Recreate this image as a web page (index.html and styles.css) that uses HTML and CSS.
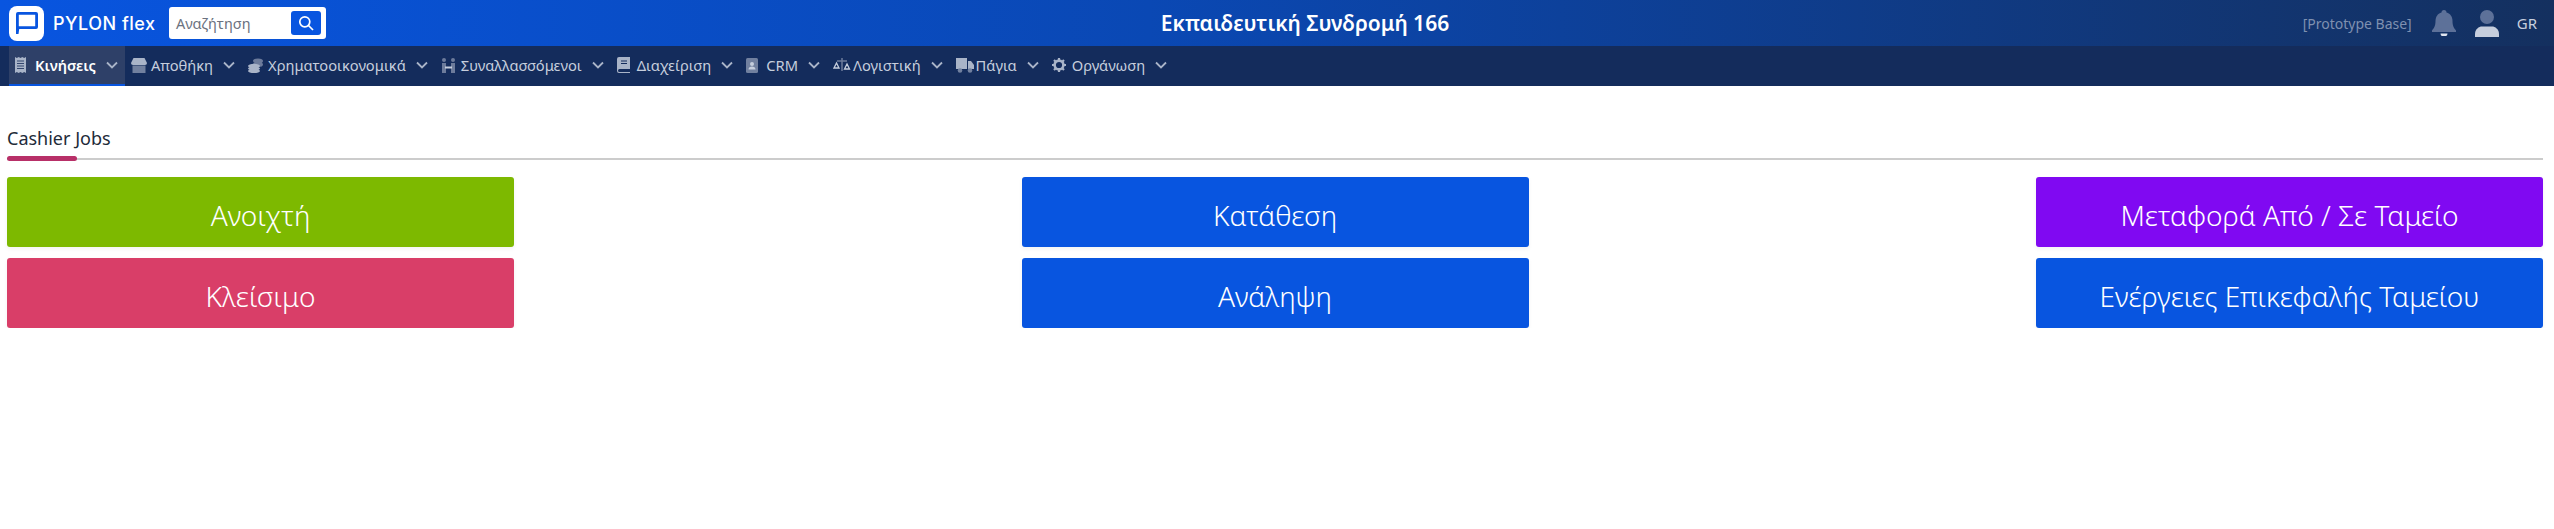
FILE: index.html
```html
<!DOCTYPE html>
<html lang="el">
<head>
    <meta charset="UTF-8">
    <title>Εκπαιδευτική Συνδρομή 166</title>
    <link rel="stylesheet" href="styles.css">
</head>
<body>

<header class="topbar">
    <div class="brand">
        <div class="logo-box">
            <svg width="22" height="24" viewBox="0 0 22 24"><path d="M2 1h18a2 2 0 0 1 2 2v13a2 2 0 0 1-2 2H3.200L2.500 23H0V3a2 2 0 0 1 2-2zM2.800 3.800V15.200h16.400V3.800z" fill="#0855e0"/></svg>
        </div>
        <span class="logo-text">PYLON flex</span>
    </div>
    <div class="search">
        <span class="search-text">Αναζήτηση</span>
        <div class="search-btn">
            <svg width="16" height="16" viewBox="0 0 16 16" fill="none" stroke="#fff" stroke-width="1.700"><circle cx="6.800" cy="6.800" r="5"/><path d="M10.500 10.500L15 15"/></svg>
        </div>
    </div>
    <div class="title">Εκπαιδευτική Συνδρομή 166</div>
    <div class="top-right">
        <span class="proto">[Prototype Base]</span>
        <svg class="bell" width="24" height="26" viewBox="0 0 24 26"><path d="M12 0a2.500 2.500 0 0 1 2.500 2.500c4 1 6 4.500 6 8.500 0 5 1.500 7 3.500 9.500v1.500H0v-1.500C2 18 3.500 16 3.500 11c0-4 2-7.500 6-8.500A2.500 2.500 0 0 1 12 0z" fill="#5d7199"/><path d="M8.500 23.500h7a3.500 3 0 0 1-7 0z" fill="#dfe4ee"/></svg>
        <svg class="user" width="24" height="27" viewBox="0 0 24 27"><circle cx="12" cy="7" r="7" fill="#5d7199"/><path d="M0 27v-3c0-5 4-7.500 7-7.500h10c3 0 7 2.500 7 7.500v3z" fill="#c6cedd"/></svg>
        <span class="lang">GR</span>
    </div>
</header>

<nav class="menu">
    <div class="menu-item active">
        <span class="menu-icon"><svg width="11" height="16" viewBox="0 0 11 16"><path d="M0 0l1.800 1 1.900-1 1.800 1 1.800-1 1.900 1L11 0v16l-1.800-1-1.900 1-1.800-1-1.800 1-1.900-1L0 16z" fill="#a9b4c8"/><path d="M2 4h7M2 6.500h7M2 9h7M2 11.500h7" stroke="#33466f" stroke-width="1"/></svg></span>
        <span>Κινήσεις</span>
        <svg class="chev" width="12" height="8" viewBox="0 0 12 8"><path d="M1 1.500l5 5 5-5" fill="none" stroke="#a9b4c8" stroke-width="1.800"/></svg>
    </div>
    <div class="menu-item">
        <span class="menu-icon"><svg width="16" height="15" viewBox="0 0 16 15"><path d="M2.500 0h11L16 5a2 2 0 0 1-2 2H2a2 2 0 0 1-2-2z" fill="#a9b4c8"/><path d="M1.500 7.500h13V15h-13z" fill="#71809f"/></svg></span>
        <span>Αποθήκη</span>
        <svg class="chev" width="12" height="8" viewBox="0 0 12 8"><path d="M1 1.500l5 5 5-5" fill="none" stroke="#a9b4c8" stroke-width="1.800"/></svg>
    </div>
    <div class="menu-item">
        <span class="menu-icon"><svg width="15" height="15" viewBox="0 0 15 15"><ellipse cx="10" cy="3" rx="5" ry="2.500" fill="#6c7b9b"/><ellipse cx="10" cy="6.500" rx="5" ry="2.500" fill="#6c7b9b"/><ellipse cx="6" cy="8" rx="6" ry="2.200" fill="#a9b4c8"/><ellipse cx="6" cy="10.500" rx="6" ry="2.200" fill="#a9b4c8"/><ellipse cx="6" cy="13" rx="6" ry="2" fill="#a9b4c8"/></svg></span>
        <span>Χρηματοοικονομικά</span>
        <svg class="chev" width="12" height="8" viewBox="0 0 12 8"><path d="M1 1.500l5 5 5-5" fill="none" stroke="#a9b4c8" stroke-width="1.800"/></svg>
    </div>
    <div class="menu-item">
        <span class="menu-icon"><svg width="15" height="15" viewBox="0 0 15 15"><circle cx="3" cy="2" r="2" fill="#6c7b9b"/><circle cx="12" cy="2" r="2" fill="#6c7b9b"/><path d="M1 5h4v10H1zM10 5h4v10h-4z" fill="#6c7b9b"/><path d="M4 9.500h7" stroke="#c6cedd" stroke-width="2"/></svg></span>
        <span>Συναλλασσόμενοι</span>
        <svg class="chev" width="12" height="8" viewBox="0 0 12 8"><path d="M1 1.500l5 5 5-5" fill="none" stroke="#a9b4c8" stroke-width="1.800"/></svg>
    </div>
    <div class="menu-item">
        <span class="menu-icon"><svg width="13" height="16" viewBox="0 0 13 16"><path d="M2 0h11v12H2.500a1.500 1.500 0 0 0 0 3H13v1H2a2 2 0 0 1-2-2V2a2 2 0 0 1 2-2z" fill="#a9b4c8"/><path d="M4 4h6M4 6.500h6" stroke="#142c5c"/></svg></span>
        <span>Διαχείριση</span>
        <svg class="chev" width="12" height="8" viewBox="0 0 12 8"><path d="M1 1.500l5 5 5-5" fill="none" stroke="#a9b4c8" stroke-width="1.800"/></svg>
    </div>
    <div class="menu-item">
        <span class="menu-icon"><svg width="12" height="15" viewBox="0 0 12 15"><rect width="12" height="15" rx="1.500" fill="#71809f"/><circle cx="6" cy="6" r="2" fill="#c6cedd"/><path d="M2.500 11.500c0-2 1.500-3 3.500-3s3.500 1 3.500 3z" fill="#c6cedd"/></svg></span>
        <span>CRM</span>
        <svg class="chev" width="12" height="8" viewBox="0 0 12 8"><path d="M1 1.500l5 5 5-5" fill="none" stroke="#a9b4c8" stroke-width="1.800"/></svg>
    </div>
    <div class="menu-item">
        <span class="menu-icon"><svg width="18" height="15" viewBox="0 0 18 15" fill="none"><path d="M9 0v13M4 3h10" stroke="#6c7b9b" stroke-width="1.500"/><path d="M3.500 5L1 10h5zM14 6l-2.500 5h5z" stroke="#c6cedd" stroke-width="1.300"/></svg></span>
        <span>Λογιστική</span>
        <svg class="chev" width="12" height="8" viewBox="0 0 12 8"><path d="M1 1.500l5 5 5-5" fill="none" stroke="#a9b4c8" stroke-width="1.800"/></svg>
    </div>
    <div class="menu-item">
        <span class="menu-icon"><svg width="18" height="15" viewBox="0 0 18 15"><path d="M0 0h11v11H0z" fill="#a9b4c8"/><path d="M12 3h3l3 4v4h-6z" fill="#a9b4c8"/><circle cx="4" cy="12.500" r="2.300" fill="#71809f"/><circle cx="14" cy="12.500" r="2.300" fill="#71809f"/></svg></span>
        <span>Πάγια</span>
        <svg class="chev" width="12" height="8" viewBox="0 0 12 8"><path d="M1 1.500l5 5 5-5" fill="none" stroke="#a9b4c8" stroke-width="1.800"/></svg>
    </div>
    <div class="menu-item">
        <span class="menu-icon"><svg width="14" height="14" viewBox="0 0 14 14"><path d="M7 2.600a4.400 4.400 0 1 0 0 8.800 4.400 4.400 0 0 0 0-8.800z" fill="none" stroke="#a9b4c8" stroke-width="2.600"/><path d="M7 0v3M7 11v3M0 7h3M11 7h3M2 2l2 2M10 10l2 2M12 2l-2 2M4 10l-2 2" stroke="#a9b4c8" stroke-width="2.200"/></svg></span>
        <span>Οργάνωση</span>
        <svg class="chev" width="12" height="8" viewBox="0 0 12 8"><path d="M1 1.500l5 5 5-5" fill="none" stroke="#a9b4c8" stroke-width="1.800"/></svg>
    </div>
</nav>

<main class="content">
    <div class="section-head">
        <h2>Cashier Jobs</h2>
    </div>
    <div class="jobs">
        <a class="job green">Ανοιχτή</a>
        <a class="job blue">Κατάθεση</a>
        <a class="job purple">Μεταφορά Από / Σε Ταμείο</a>
        <a class="job pink">Κλείσιμο</a>
        <a class="job blue">Ανάληψη</a>
        <a class="job blue">Ενέργειες Επικεφαλής Ταμείου</a>
    </div>
</main>

</body>
</html>
```

FILE: styles.css
```css
body {
    font-family: "Noto Sans", sans-serif;
    margin: 0;
    padding: 0;
    background-color: #fff;
}
.topbar {
    display: flex;
    align-items: center;
    height: 46px;
    padding-left: 9px;
    background: linear-gradient(90deg, #0855e0 0%, #0a48b4 45%, #14305f 100%);
}
.brand {
    display: flex;
    align-items: center;
    width: 160px;
}
.logo-box {
    display: flex;
    align-items: center;
    justify-content: center;
    width: 35px;
    height: 35px;
    background: #fff;
    border-radius: 8px;
}
.logo-text {
    margin-left: 9px;
    color: #fff;
    font-family: Inter, sans-serif;
    font-weight: 500;
    font-size: 18px;
    letter-spacing: 0.5px;
    white-space: nowrap;
}
.search {
    display: flex;
    align-items: center;
    justify-content: space-between;
    box-sizing: border-box;
    width: 157px;
    height: 32px;
    padding: 0 5px 0 7px;
    background: #fff;
    border-radius: 3px;
}
.search-text {
    color: #6b7280;
    font-size: 14.5px;
}
.search-btn {
    display: flex;
    align-items: center;
    justify-content: center;
    width: 30px;
    height: 24px;
    background: #0855e0;
    border-radius: 3px;
}
.title {
    flex: 1;
    padding-left: 30px;
    text-align: center;
    color: #fff;
    font-size: 21px;
    font-weight: 600;
}
.top-right {
    display: flex;
    align-items: center;
    justify-content: flex-end;
    width: 300px;
    padding-right: 17px;
    box-sizing: border-box;
    color: #c6cedd;
}
.proto {
    font-size: 14px;
    color: #7f90b0;
    white-space: nowrap;
}
.bell {
    margin-left: 20px;
}
.user {
    margin-left: 19px;
}
.lang {
    margin-left: 18px;
    font-size: 15px;
}
.menu {
    display: flex;
    height: 40px;
    padding-left: 9px;
    background-color: #142c5c;
    color: #c6cedd;
    font-size: 14.7px;
}
.menu-item {
    display: flex;
    align-items: center;
    box-sizing: border-box;
    height: 40px;
    padding: 0 7px 2px 6px;
    white-space: nowrap;
}
.menu-item.active {
    background-color: #2e4068;
    border-bottom: 2px solid #0855e0;
    padding-bottom: 0;
    color: #fff;
    font-weight: 600;
}
.menu-icon {
    display: flex;
    align-items: center;
    width: 20px;
}
.chev {
    margin-left: 10px;
}
.content {
    padding: 39px 11px 0 7px;
}
.section-head {
    position: relative;
    height: 33px;
    border-bottom: 2px solid #cccccc;
}
.section-head::after {
    content: "";
    position: absolute;
    left: 0;
    bottom: -3px;
    width: 70px;
    height: 5px;
    background: #b83068;
    border-radius: 3px;
}
.section-head h2 {
    margin: 0;
    font-size: 18px;
    font-weight: 400;
    line-height: 26px;
    color: #222b38;
}
.jobs {
    display: grid;
    grid-template-columns: repeat(3, 507px);
    justify-content: space-between;
    gap: 11px 0;
    margin-top: 17px;
}
.job {
    display: block;
    height: 70px;
    padding-top: 8px;
    box-sizing: border-box;
    line-height: 61px;
    text-align: center;
    font-size: 28px;
    font-weight: 300;
    color: #fff;
    border-radius: 3px;
    box-shadow: 0 2px 4px rgba(0, 0, 0, 0.05);
}
.green {
    background-color: #7db900;
}
.blue {
    background-color: #0855e0;
}
.purple {
    background-color: #8009f2;
}
.pink {
    background-color: #d93e68;
}
```
